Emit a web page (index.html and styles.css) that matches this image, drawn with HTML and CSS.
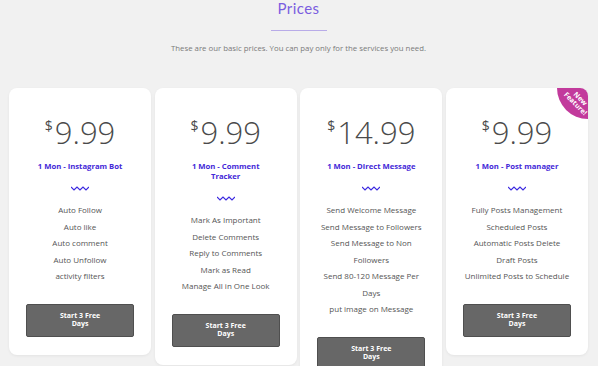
FILE: index.html
```html
<!DOCTYPE html>
<html>
<head>
<meta charset="utf-8">
<link rel="stylesheet" href="styles.css">
</head>
<body>
<section class="prices">
  <header class="head">
    <h1 class="title">Prices</h1>
    <div class="rule"></div>
    <p class="sub">These are our basic prices. You can pay only for the services you need.</p>
  </header>
  <div class="cards">
    <div class="card">
      <div class="price"><span class="cur">$</span><span class="num">9.99</span></div>
      <div class="plan">1 Mon - Instagram Bot</div>
      <svg class="wave" width="18" height="5" viewBox="0 0 18 5"><polyline points="0,1 3,4 6,1 9,4 12,1 15,4 18,1" fill="none" stroke="#3d2be0" stroke-width="1.2"/></svg>
      <ul class="feats">
        <li>Auto Follow</li><li>Auto like</li><li>Auto comment</li><li>Auto Unfollow</li><li>activity filters</li>
      </ul>
      <button class="btn"><span>Start 3 Free Days</span></button>
    </div>
    <div class="card">
      <div class="price"><span class="cur">$</span><span class="num">9.99</span></div>
      <div class="plan">1 Mon - Comment<br>Tracker</div>
      <svg class="wave" width="18" height="5" viewBox="0 0 18 5"><polyline points="0,1 3,4 6,1 9,4 12,1 15,4 18,1" fill="none" stroke="#3d2be0" stroke-width="1.2"/></svg>
      <ul class="feats">
        <li>Mark As Important</li><li>Delete Comments</li><li>Reply to Comments</li><li>Mark as Read</li><li>Manage All in One Look</li>
      </ul>
      <button class="btn"><span>Start 3 Free Days</span></button>
    </div>
    <div class="card">
      <div class="price"><span class="cur">$</span><span class="num">14.99</span></div>
      <div class="plan">1 Mon - Direct Message</div>
      <svg class="wave" width="18" height="5" viewBox="0 0 18 5"><polyline points="0,1 3,4 6,1 9,4 12,1 15,4 18,1" fill="none" stroke="#3d2be0" stroke-width="1.2"/></svg>
      <ul class="feats">
        <li>Send Welcome Message</li><li>Send Message to Followers</li><li>Send Message to Non Followers</li><li>Send 80-120 Message Per Days</li><li>put image on Message</li>
      </ul>
      <button class="btn"><span>Start 3 Free Days</span></button>
    </div>
    <div class="card">
      <div class="badge"><span>New<br>Feature!</span></div>
      <div class="price"><span class="cur">$</span><span class="num">9.99</span></div>
      <div class="plan">1 Mon - Post manager</div>
      <svg class="wave" width="18" height="5" viewBox="0 0 18 5"><polyline points="0,1 3,4 6,1 9,4 12,1 15,4 18,1" fill="none" stroke="#3d2be0" stroke-width="1.2"/></svg>
      <ul class="feats">
        <li>Fully Posts Management</li><li>Scheduled Posts</li><li>Automatic Posts Delete</li><li>Draft Posts</li><li>Unlimited Posts to Schedule</li>
      </ul>
      <button class="btn"><span>Start 3 Free Days</span></button>
    </div>
  </div>
</section>
</body>
</html>
```
FILE: styles.css
```css
* { box-sizing: border-box; }
html, body { margin: 0; padding: 0; overflow: hidden; }
body {
  background: #f1f1f1;
  font-family: "Open Sans", "Liberation Sans", sans-serif;
  height: 366px;
}
.prices { padding: 0 10px 0 9px; height: 366px; overflow: hidden; }
.head { display: flex; flex-direction: column; align-items: center; }
.title {
  margin: 0;
  font-family: "Lato", "Open Sans", sans-serif;
  font-weight: 400;
  font-size: 15px;
  line-height: 17px;
  letter-spacing: 0.4px;
  color: #7a5de0;
}
.rule { width: 56px; height: 1px; background: #b8abe8; margin-top: 13px; }
.sub {
  margin: 12px 0 0;
  font-size: 7.8px;
  line-height: 10px;
  color: #7a7a7a;
}
.cards {
  margin-top: 35px;
  display: grid;
  grid-template-columns: repeat(4, 1fr);
  gap: 3.5px;
  align-items: start;
}
.card {
  position: relative;
  overflow: hidden;
  background: #fff;
  border-radius: 8px;
  box-shadow: 0 1px 3px rgba(0,0,0,0.06);
  display: flex;
  flex-direction: column;
  align-items: center;
  padding: 29px 0 18px;
}
.price { display: flex; align-items: flex-start; justify-content: center; color: #4a4a4a; }
.cur { font-size: 14px; line-height: 14px; margin-top: 2px; margin-right: 2px; font-weight: 400; }
.num { font-size: 31px; line-height: 31px; font-weight: 300; }
.plan {
  margin-top: 13px;
  font-size: 7.7px;
  line-height: 10px;
  font-weight: 700;
  color: #4429d8;
  text-align: center;
}
.wave { display: block; margin-top: 15px; }
.feats {
  list-style: none;
  margin: 11px 0 0;
  padding: 0 14px;
  font-size: 8px;
  line-height: 16.5px;
  color: #555;
  text-align: center;
}
.btn {
  margin-top: 19px;
  width: 108px;
  height: 33px;
  background: #676767;
  border: 1px solid #4f4f4f;
  border-radius: 2px;
  color: #fff;
  font-family: "Open Sans", sans-serif;
  font-weight: 700;
  font-size: 7px;
  line-height: 8.5px;
  display: flex;
  align-items: center;
  justify-content: center;
  padding: 0;
}
.btn span { display: block; width: 50px; text-align: center; }
.badge {
  position: absolute;
  top: -31px;
  right: -31px;
  width: 62px;
  height: 62px;
  border-radius: 50%;
  background: #c23a9c;
}
.badge span {
  position: absolute;
  left: 5px;
  top: 37px;
  width: 32px;
  transform: rotate(45deg);
  color: #fff;
  font-size: 7px;
  line-height: 7px;
  font-weight: 700;
  text-align: center;
}
```
